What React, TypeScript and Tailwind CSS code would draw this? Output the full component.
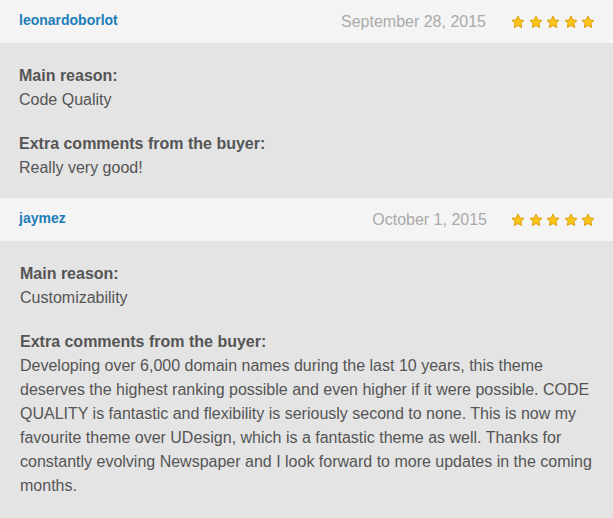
import React from 'react';

const reviews = [
  {
    name: 'leonardoborlot',
    date: 'September 28, 2015',
    reason: 'Code Quality',
    comment: 'Really very good!',
    pad: 'pl-[19px] pr-[19px] pb-[18px]',
    dateGap: 'mr-[25px]',
  },
  {
    name: 'jaymez',
    date: 'October 1, 2015',
    reason: 'Customizability',
    comment:
      'Developing over 6,000 domain names during the last 10 years, this theme deserves the highest ranking possible and even higher if it were possible. CODE QUALITY is fantastic and flexibility is seriously second to none. This is now my favourite theme over UDesign, which is a fantastic theme as well. Thanks for constantly evolving Newspaper and I look forward to more updates in the coming months.',
    pad: 'pl-[20px] pr-[18px] pb-[19px]',
    dateGap: 'mr-[24px]',
  },
];

function Star() {
  return (
    <svg width="14" height="14" viewBox="0 0 24 24">
      <path
        d="M12 1.8l3.1 6.6 7.2.9-5.3 5 1.4 7.2L12 18l-6.4 3.5L7 14.3l-5.3-5 7.2-.9z"
        fill="#fcc419"
        stroke="#d99a00"
        strokeWidth="1.6"
        strokeLinejoin="round"
      />
    </svg>
  );
}

export default function App() {
  return (
    <div className="w-[613px] h-[518px] bg-[#e4e4e4] text-[#555] font-['Liberation_Sans',Arial,sans-serif] overflow-hidden">
      {reviews.map((r, i) => (
        <div key={i}>
          <div className="h-[43px] bg-[#f4f4f4] flex items-center pl-[19px] pr-[18px]">
            <span className="text-[14px] font-bold text-[#1c7db9] -mt-[3px]">{r.name}</span>
            <span className={`ml-auto text-[16px] text-[#aaaaaa] ${r.dateGap}`}>{r.date}</span>
            <div className="flex gap-[3.5px]">
              {[0, 1, 2, 3, 4].map((s) => (
                <Star key={s} />
              ))}
            </div>
          </div>
          <div className={`${r.pad} pt-[21px] text-[16px] leading-[24px]`}>
            <div className="font-bold">Main reason:</div>
            <div>{r.reason}</div>
            <div className="font-bold mt-[20px]">Extra comments from the buyer:</div>
            <div>{r.comment}</div>
          </div>
        </div>
      ))}
    </div>
  );
}
